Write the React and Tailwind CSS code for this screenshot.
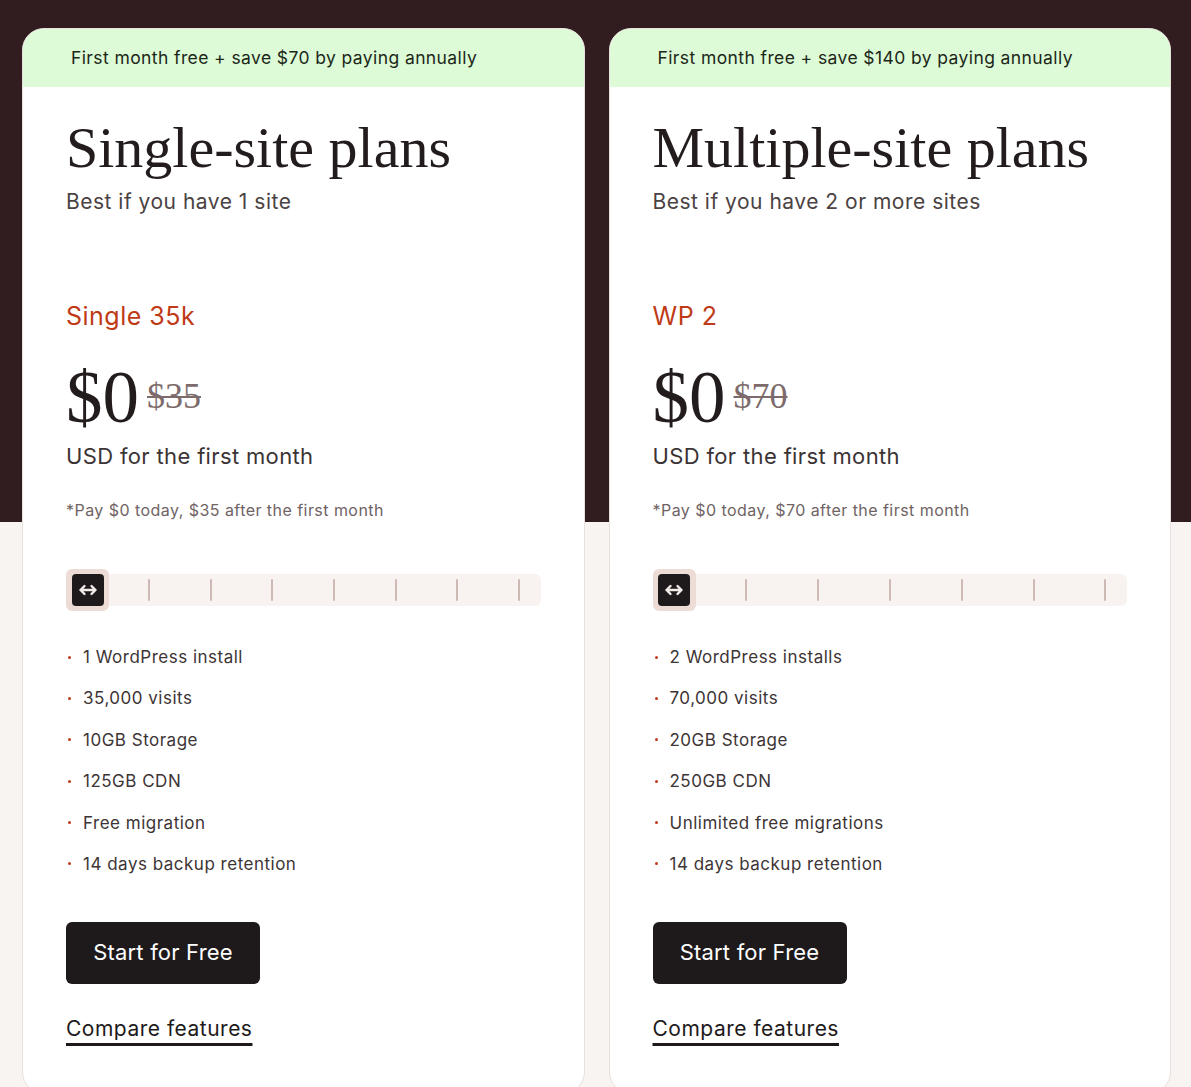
import React from "react";

const sans = "font-['Inter','Noto_Sans',sans-serif]";
const serif = "font-['Liberation_Serif','DejaVu_Serif',serif]";

const plans = [
  {
    promo: "First month free + save $70 by paying annually",
    title: "Single-site plans",
    subtitle: "Best if you have 1 site",
    name: "Single 35k",
    was: "$35",
    note: "*Pay $0 today, $35 after the first month",
    ticks: 7,
    features: [
      "1 WordPress install",
      "35,000 visits",
      "10GB Storage",
      "125GB CDN",
      "Free migration",
      "14 days backup retention",
    ],
  },
  {
    promo: "First month free + save $140 by paying annually",
    title: "Multiple-site plans",
    subtitle: "Best if you have 2 or more sites",
    name: "WP 2",
    was: "$70",
    note: "*Pay $0 today, $70 after the first month",
    ticks: 6,
    features: [
      "2 WordPress installs",
      "70,000 visits",
      "20GB Storage",
      "250GB CDN",
      "Unlimited free migrations",
      "14 days backup retention",
    ],
  },
];

// double-headed arrow on the slider handle
const ArrowsIcon = () => (
  <svg width="20" height="12" viewBox="0 0 20 12" fill="none">
    <path
      d="M2.5 6h15M6.5 2 2.5 6l4 4M13.5 2l4 4-4 4"
      stroke="#f3ebe7"
      strokeWidth="2.4"
      strokeLinecap="round"
      strokeLinejoin="round"
    />
  </svg>
);

const Slider = ({ ticks }) => (
  <div className="flex h-8 items-center justify-between rounded-md bg-[#f8f3f0]">
    {/* handle */}
    <div className="flex h-[42px] w-[43px] items-center justify-center rounded-md bg-[#ecdcd5]">
      <div className="flex h-8 w-8 items-center justify-center rounded bg-[#1e1a1b]">
        <ArrowsIcon />
      </div>
    </div>
    {Array.from({ length: ticks }).map((_, i) => (
      <div key={i} className="flex w-[43px] justify-center">
        <div className="h-[22px] w-[2px] rounded-full bg-[#cfb9b4]" />
      </div>
    ))}
  </div>
);

const PlanCard = ({ plan }) => (
  <div className="flex-1 overflow-hidden rounded-[22px] border border-[#e8e0dc] bg-white">
    {/* promo banner */}
    <div className={`flex h-[58px] items-center bg-[#ddfbd6] pl-[48px] text-[17.5px] tracking-[0.4px] text-[#1c2719] ${sans}`}>
      {plan.promo}
    </div>

    <div className="px-[43px] pb-[50px] pt-[32px]">
      <h2 className={`text-[58px] leading-[58px] text-[#231c1d] ${serif}`}>{plan.title}</h2>
      <p className={`mt-[11px] text-[21px] leading-[28px] tracking-[0.5px] text-[#4b4243] ${sans}`}>{plan.subtitle}</p>

      <h3 className={`mt-[84px] text-[25px] leading-[32px] tracking-[0.5px] text-[#bf3a16] ${sans}`}>{plan.name}</h3>

      <div className={`mt-[30px] flex items-start ${serif}`}>
        <span className="text-[73px] leading-[72px] text-[#231c1d]">$0</span>
        <span className="ml-[8px] mt-[14px] text-[36px] leading-[40px] text-[#7d6b6b] line-through decoration-[2px]">
          {plan.was}
        </span>
      </div>

      <p className={`mt-[7px] text-[22px] leading-[30px] tracking-[0.35px] text-[#3b3334] ${sans}`}>USD for the first month</p>
      <p className={`mt-[27px] text-[16px] leading-[24px] tracking-[0.45px] text-[#6f6364] ${sans}`}>{plan.note}</p>

      <div className="mt-[52px]">
        <Slider ticks={plan.ticks} />
      </div>

      {/* features */}
      <ul className={`mt-[39px] flex flex-col gap-[17.4px] text-[17px] leading-[24px] tracking-[0.5px] text-[#3d3435] ${sans}`}>
        {plan.features.map((f) => (
          <li key={f} className="flex items-center">
            <span className="ml-[2px] mr-[12px] h-[3px] w-[3px] rounded-full bg-[#c0391b]" />
            {f}
          </li>
        ))}
      </ul>

      <button className={`mt-[46px] flex h-[62px] w-[194px] items-center justify-center rounded-md bg-[#1e1a1b] text-[22px] tracking-[0.2px] text-white ${sans}`}>
        Start for Free
      </button>

      <div className="mt-[31px]">
        <a
          href="#"
          className={`text-[21px] leading-[28px] tracking-[0.5px] text-[#1e1a1b] underline decoration-[3px] underline-offset-[7px] ${sans}`}
        >
          Compare features
        </a>
      </div>
    </div>
  </div>
);

export default function App() {
  return (
    <div className="min-h-[1087px] bg-[linear-gradient(to_bottom,#311d1f_522px,#f8f4f1_522px)] pl-[22px] pr-[20px] pt-[28px]">
      <div className="flex gap-6">
        {plans.map((p) => (
          <PlanCard key={p.name} plan={p} />
        ))}
      </div>
    </div>
  );
}
